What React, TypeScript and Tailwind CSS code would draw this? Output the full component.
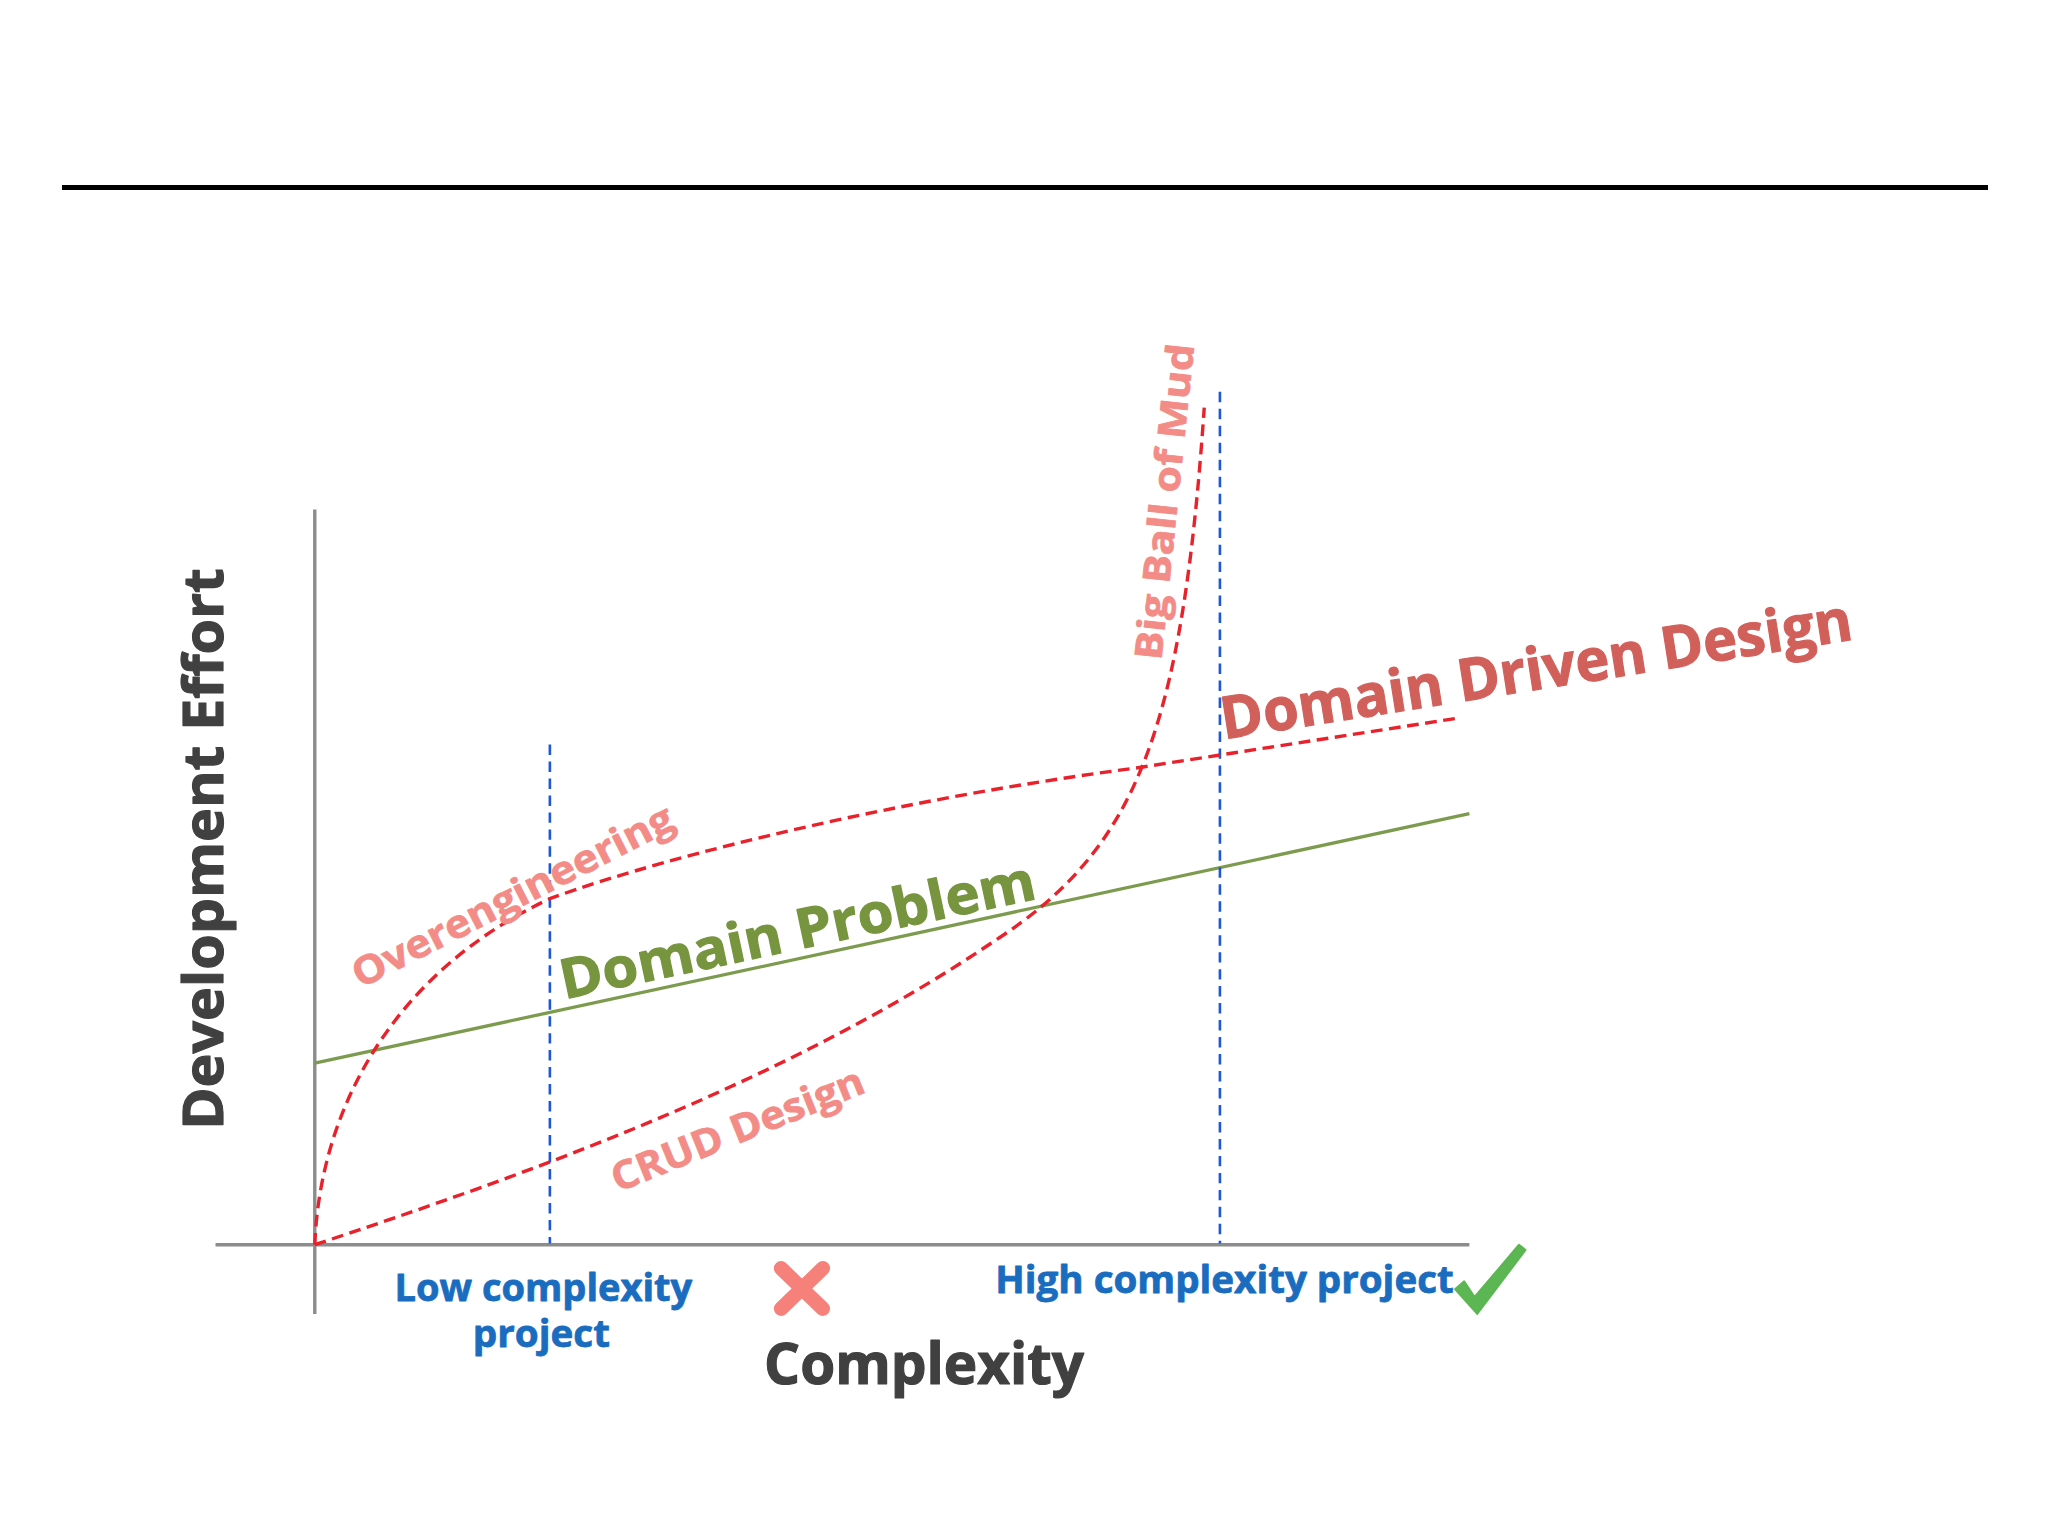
import React from "react";

const FONT = "'Open Sans', 'Noto Sans', 'Liberation Sans', sans-serif";

type LabelProps = {
  t: string;
  x: number;
  y: number;
  rot?: number;
  size: number;
  fill: string;
  len: number;
  bold?: number;
};

function Label({ t, x, y, rot = 0, size, fill, len, bold = 0.7 }: LabelProps) {
  return (
    <text
      transform={`translate(${x},${y}) rotate(${rot})`}
      fontSize={size}
      fill={fill}
      stroke={fill}
      strokeWidth={bold}
      strokeLinejoin="round"
      textLength={len}
      lengthAdjust="spacingAndGlyphs"
    >
      {t}
    </text>
  );
}

function Chart() {
  return (
    <svg
      width={2048}
      height={1346}
      viewBox="0 145.47 1568 1030.53"
      className="block"
      fontFamily={FONT}
      fontWeight={700}
    >
      {/* axes */}
      <line x1={241} y1={390} x2={241} y2={1006} stroke="#8c8c8c" strokeWidth={2.6} />
      <line x1={165} y1={953} x2={1125} y2={953} stroke="#8c8c8c" strokeWidth={2.6} />

      {/* domain problem line */}
      <line x1={241} y1={814} x2={1125} y2={623} stroke="#7d9b4e" strokeWidth={2.5} />

      {/* blue dashed verticals */}
      <line x1={421} y1={570} x2={421} y2={952} stroke="#1f57d6" strokeWidth={2} strokeDasharray="8 5" />
      <line x1={934} y1={300} x2={934} y2={952} stroke="#1f57d6" strokeWidth={2} strokeDasharray="8 5" />

      {/* overengineering / DDD curve */}
      <path
        d="M241,953 C245,850 300,745 421,688 C520,652 700,610 870,588 L1115,550"
        fill="none"
        stroke="#e8212b"
        strokeWidth={2.6}
        strokeDasharray="9 5"
      />
      {/* CRUD / big ball of mud curve */}
      <path
        d="M241,953 C400,900 600,830 762,720 C870,650 905,560 922,312"
        fill="none"
        stroke="#e8212b"
        strokeWidth={2.6}
        strokeDasharray="9 5"
      />

      {/* labels */}
      <Label t="Development Effort" x={171} y={865} rot={-90} size={43} fill="#404040" len={430} bold={0.9} />
      <Label t="Complexity" x={585} y={1060} size={44} fill="#404040" len={245} bold={0.9} />
      <Label t="Low complexity" x={302} y={996} size={29} fill="#1a6cbf" len={228} bold={0.6} />
      <Label t="project" x={362} y={1031} size={29} fill="#1a6cbf" len={105} bold={0.6} />
      <Label t="High complexity project" x={762} y={990} size={29} fill="#1a6cbf" len={351} bold={0.6} />

      <Label t="Domain Problem" x={432} y={765} rot={-12} size={42} fill="#77943f" len={371} bold={0.9} />
      <Label t="Domain Driven Design" x={937} y={566} rot={-9} size={45} fill="#d1605b" len={489} bold={0.9} />
      <Label t="Overengineering" x={276} y={757} rot={-27} size={30} fill="#f38c86" len={272} bold={0.6} />
      <Label t="CRUD Design" x={473} y={913} rot={-22} size={30} fill="#f38c86" len={206} bold={0.6} />
      <Label t="Big Ball of Mud" x={889} y={506} rot={-84} size={29} fill="#f38c86" len={243} bold={0.6} />

      {/* X mark */}
      <g stroke="#f5817a" strokeWidth={11} strokeLinecap="round">
        <line x1={598} y1={971} x2={630} y2={1002} />
        <line x1={630} y1={971} x2={598} y2={1002} />
      </g>

      {/* check mark */}
      <path
        d="M1114,987 L1121,981 L1129,993 L1163,953 L1168,957 L1131,1006 Z"
        fill="#5cb653"
        stroke="#5cb653"
        strokeWidth={1.5}
        strokeLinejoin="round"
      />
    </svg>
  );
}

export default function App() {
  return (
    <div className="w-[2048px] h-[1536px] bg-white overflow-hidden">
      <div className="h-[185px]" />
      <div className="ml-[62px] w-[1926px] h-[5px] bg-black" />
      <Chart />
    </div>
  );
}
